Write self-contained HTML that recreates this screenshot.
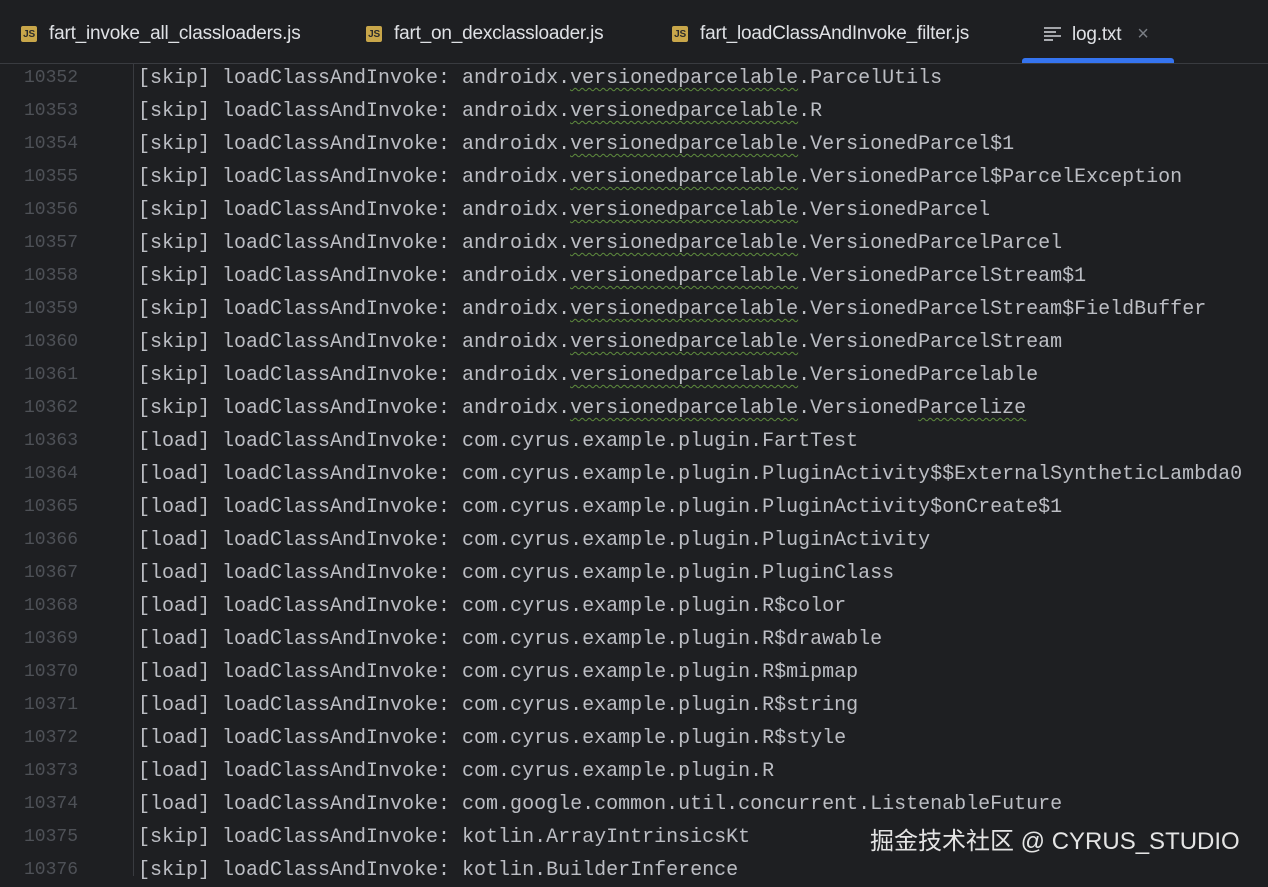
<!DOCTYPE html>
<html><head><meta charset="utf-8"><style>
html,body{margin:0;padding:0;width:1268px;height:876px;overflow:hidden;background:#1e1f22;}
.tabs{position:absolute;left:0;top:0;width:1268px;height:63px;background:#1e1f22;border-bottom:1px solid #393b40;z-index:2;font-family:"Liberation Sans",sans-serif;font-size:19px;color:#dfe1e5;}
.tab{position:absolute;top:21px;height:26px;line-height:26px;white-space:nowrap;letter-spacing:-0.2px;}
.js{display:inline-block;width:16px;height:16px;background:#c8a64a;color:#2b2b2b;font-size:10px;font-weight:bold;line-height:17px;text-align:center;border-radius:2px;vertical-align:2px;margin-right:12px;}
.ul{position:absolute;left:1022px;top:58px;width:152px;height:5px;background:#3574f0;border-radius:3px 3px 0 0;}
.gut{position:absolute;left:133px;top:64px;width:1px;height:812px;background:#393b40;}
.code{position:absolute;left:0;top:62px;font-family:"Liberation Mono",monospace;font-size:20px;}
.ln{height:33px;line-height:33px;white-space:pre;position:relative;}
.n{position:absolute;left:24px;width:60px;color:#4e5157;font-size:18px;}
.t{position:absolute;left:138px;color:#bcbec4;}
.w{text-decoration:underline wavy #5f8c3e;text-decoration-thickness:1px;text-underline-offset:4px;}
.wm{position:absolute;left:870px;top:821px;font-family:"Liberation Sans","Noto Sans CJK SC",sans-serif;font-size:24px;color:#e4e4e4;z-index:3;white-space:nowrap;}
</style></head><body>
<div class="tabs">
<div class="tab" style="left:21px"><span class="js">JS</span>fart_invoke_all_classloaders.js</div>
<div class="tab" style="left:366px"><span class="js">JS</span>fart_on_dexclassloader.js</div>
<div class="tab" style="left:672px"><span class="js">JS</span>fart_loadClassAndInvoke_filter.js</div>
<div class="tab" style="left:1044px"><svg width="18" height="16" style="vertical-align:-2px;margin-right:10px" viewBox="0 0 18 16"><g stroke="#ced0d6" stroke-width="1.6"><line x1="0" y1="2" x2="17" y2="2"/><line x1="0" y1="6" x2="12" y2="6"/><line x1="0" y1="10" x2="17" y2="10"/><line x1="0" y1="14" x2="9" y2="14"/></g></svg>log.txt<span style="color:#7a7e85;margin-left:16px;font-size:20px">×</span></div>
<div class="ul"></div>
</div>
<div class="gut"></div>
<div class="code">
<div class="ln"><span class="n">10352</span><span class="t">[skip] loadClassAndInvoke: androidx.<span class="w">versionedparcelable</span>.ParcelUtils</span></div>
<div class="ln"><span class="n">10353</span><span class="t">[skip] loadClassAndInvoke: androidx.<span class="w">versionedparcelable</span>.R</span></div>
<div class="ln"><span class="n">10354</span><span class="t">[skip] loadClassAndInvoke: androidx.<span class="w">versionedparcelable</span>.VersionedParcel$1</span></div>
<div class="ln"><span class="n">10355</span><span class="t">[skip] loadClassAndInvoke: androidx.<span class="w">versionedparcelable</span>.VersionedParcel$ParcelException</span></div>
<div class="ln"><span class="n">10356</span><span class="t">[skip] loadClassAndInvoke: androidx.<span class="w">versionedparcelable</span>.VersionedParcel</span></div>
<div class="ln"><span class="n">10357</span><span class="t">[skip] loadClassAndInvoke: androidx.<span class="w">versionedparcelable</span>.VersionedParcelParcel</span></div>
<div class="ln"><span class="n">10358</span><span class="t">[skip] loadClassAndInvoke: androidx.<span class="w">versionedparcelable</span>.VersionedParcelStream$1</span></div>
<div class="ln"><span class="n">10359</span><span class="t">[skip] loadClassAndInvoke: androidx.<span class="w">versionedparcelable</span>.VersionedParcelStream$FieldBuffer</span></div>
<div class="ln"><span class="n">10360</span><span class="t">[skip] loadClassAndInvoke: androidx.<span class="w">versionedparcelable</span>.VersionedParcelStream</span></div>
<div class="ln"><span class="n">10361</span><span class="t">[skip] loadClassAndInvoke: androidx.<span class="w">versionedparcelable</span>.VersionedParcelable</span></div>
<div class="ln"><span class="n">10362</span><span class="t">[skip] loadClassAndInvoke: androidx.<span class="w">versionedparcelable</span>.Versioned<span class="w">Parcelize</span></span></div>
<div class="ln"><span class="n">10363</span><span class="t">[load] loadClassAndInvoke: com.cyrus.example.plugin.FartTest</span></div>
<div class="ln"><span class="n">10364</span><span class="t">[load] loadClassAndInvoke: com.cyrus.example.plugin.PluginActivity$$ExternalSyntheticLambda0</span></div>
<div class="ln"><span class="n">10365</span><span class="t">[load] loadClassAndInvoke: com.cyrus.example.plugin.PluginActivity$onCreate$1</span></div>
<div class="ln"><span class="n">10366</span><span class="t">[load] loadClassAndInvoke: com.cyrus.example.plugin.PluginActivity</span></div>
<div class="ln"><span class="n">10367</span><span class="t">[load] loadClassAndInvoke: com.cyrus.example.plugin.PluginClass</span></div>
<div class="ln"><span class="n">10368</span><span class="t">[load] loadClassAndInvoke: com.cyrus.example.plugin.R$color</span></div>
<div class="ln"><span class="n">10369</span><span class="t">[load] loadClassAndInvoke: com.cyrus.example.plugin.R$drawable</span></div>
<div class="ln"><span class="n">10370</span><span class="t">[load] loadClassAndInvoke: com.cyrus.example.plugin.R$mipmap</span></div>
<div class="ln"><span class="n">10371</span><span class="t">[load] loadClassAndInvoke: com.cyrus.example.plugin.R$string</span></div>
<div class="ln"><span class="n">10372</span><span class="t">[load] loadClassAndInvoke: com.cyrus.example.plugin.R$style</span></div>
<div class="ln"><span class="n">10373</span><span class="t">[load] loadClassAndInvoke: com.cyrus.example.plugin.R</span></div>
<div class="ln"><span class="n">10374</span><span class="t">[load] loadClassAndInvoke: com.google.common.util.concurrent.ListenableFuture</span></div>
<div class="ln"><span class="n">10375</span><span class="t">[skip] loadClassAndInvoke: kotlin.ArrayIntrinsicsKt</span></div>
<div class="ln"><span class="n">10376</span><span class="t">[skip] loadClassAndInvoke: kotlin.BuilderInference</span></div>
</div>
<div class="wm">掘金技术社区 @ CYRUS_STUDIO</div>
</body></html>
